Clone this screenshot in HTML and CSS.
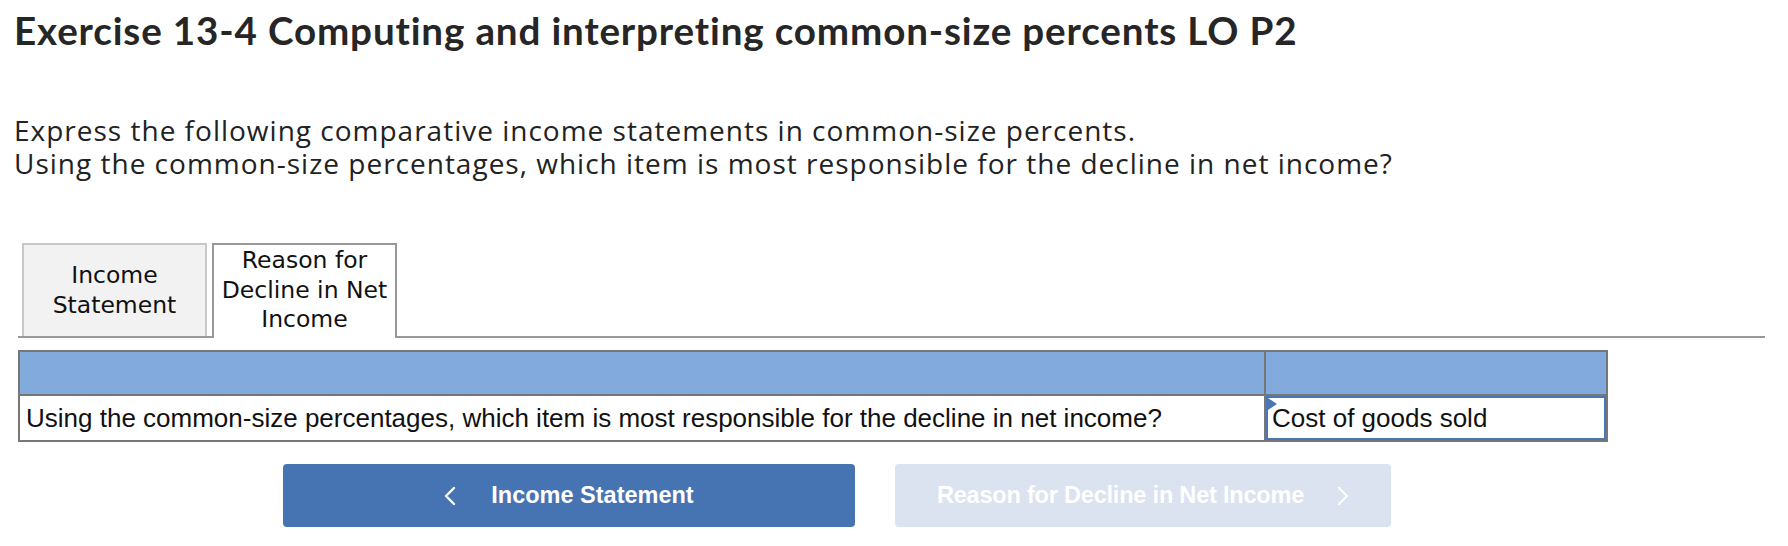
FILE: index.html
```html
<!DOCTYPE html>
<html lang="en">
<head>
<meta charset="utf-8">
<title>Exercise 13-4</title>
<link rel="stylesheet" href="styles.css">
</head>
<body>
<div class="page">
  <h1 class="title">Exercise 13-4 Computing and interpreting common-size percents LO P2</h1>
  <div class="intro">
    <p class="line">Express the following comparative income statements in common-size percents.</p>
    <p class="line">Using the common-size percentages, which item is most responsible for the decline in net income?</p>
  </div>

  <div class="tabs">
    <div class="tab">Income<br>Statement</div>
    <div class="tab active">Reason for<br>Decline in Net<br>Income</div>
  </div>

  <table class="grid">
    <tr class="head">
      <th class="col-q"></th>
      <th class="col-a"></th>
    </tr>
    <tr>
      <td class="col-q question">Using the common-size percentages, which item is most responsible for the decline in net income?</td>
      <td class="col-a answer-cell"><div class="answer"><span class="flag"></span>Cost of goods sold</div></td>
    </tr>
  </table>

  <div class="nav">
    <button class="btn prev" type="button">
      <svg class="chev" viewBox="0 0 12 20" width="12" height="20"><path d="M10 2 L2 10 L10 18" fill="none" stroke="#fff" stroke-width="2.4" stroke-linecap="round" stroke-linejoin="round"/></svg>
      <span>Income Statement</span>
    </button>
    <button class="btn next" type="button" disabled>
      <span>Reason for Decline in Net Income</span>
      <svg class="chev" viewBox="0 0 12 20" width="12" height="20"><path d="M2 2 L10 10 L2 18" fill="none" stroke="#fff" stroke-width="2.4" stroke-linecap="round" stroke-linejoin="round"/></svg>
    </button>
  </div>
</div>
</body>
</html>
```

FILE: styles.css
```css
html, body {
  margin: 0;
  padding: 0;
  background: #fff;
}

.page {
  padding: 7px 0 0 14px;
  font-family: Lato, "Open Sans", sans-serif;
  color: #222;
}

.title {
  margin: 0;
  font-family: Lato, sans-serif;
  font-weight: 700;
  font-size: 38.6px;
  line-height: 46px;
  letter-spacing: 0.85px;
  font-variant-ligatures: none;
  color: #262626;
}

.intro {
  margin: 61px 0 0 0;
  font-family: "Open Sans", Lato, sans-serif;
  font-size: 28px;
  letter-spacing: 1px;
  color: #222;
}

.line {
  margin: 0;
  height: 33px;
  line-height: 33px;
  white-space: nowrap;
}

.tabs {
  display: flex;
  align-items: flex-end;
  margin: 63px 0 0 4px;
  width: 1747px;
  padding-left: 4px;
  box-sizing: border-box;
  border-bottom: 2px solid #999;
}

.tab {
  box-sizing: border-box;
  width: 185px;
  height: 93px;
  display: flex;
  align-items: center;
  justify-content: center;
  text-align: center;
  font-family: "DejaVu Sans", Verdana, sans-serif;
  font-size: 23.5px;
  line-height: 29.5px;
  color: #111;
  background: #f2f2f2;
  border: 2px solid #c8c8c8;
  border-bottom: none;
}

.tab.active {
  height: 95px;
  margin-left: 5px;
  margin-bottom: -2px;
  background: #fff;
  border-color: #999;
  padding-bottom: 2px;
}

.grid {
  margin: 12px 0 0 4px;
  width: 1590px;
  border-collapse: collapse;
  font-family: "Liberation Sans", Arial, sans-serif;
  font-size: 26px;
  color: #111;
}

.grid th,
.grid td {
  border: 2px solid #777;
  height: 44px;
  padding: 0;
  box-sizing: border-box;
}

.grid .head th {
  background: #82aadd;
}

.col-a {
  width: 342px;
}

.question {
  padding-left: 6px !important;
  text-align: left;
}

.answer-cell {
  vertical-align: top;
}

.answer {
  position: relative;
  box-sizing: border-box;
  height: 44px;
  margin: 0;
  border: 2px solid #4a76b6;
  padding: 0 0 0 4px;
  display: flex;
  align-items: center;
  font-size: 26px;
  background: #fff;
}

.flag {
  position: absolute;
  left: 0;
  top: 0;
  width: 0;
  height: 0;
  border-top: 6px solid transparent;
  border-bottom: 6px solid transparent;
  border-left: 9px solid #4a76b6;
}

.nav {
  display: flex;
  gap: 40px;
  margin-top: 22px;
  padding-left: 269px;
}

.btn {
  display: flex;
  align-items: center;
  justify-content: center;
  height: 63px;
  border: none;
  border-radius: 4px;
  font-family: "Liberation Sans", Arial, sans-serif;
  font-weight: 700;
  font-size: 23.5px;
  color: #fff;
  padding: 0;
  cursor: pointer;
}

.btn.prev {
  width: 572px;
  gap: 35px;
  background: #4674b2;
}

.btn.next {
  width: 496px;
  gap: 33px;
  background: #dae3ef;
  cursor: default;
  letter-spacing: -0.2px;
}

.chev {
  display: block;
}
```
